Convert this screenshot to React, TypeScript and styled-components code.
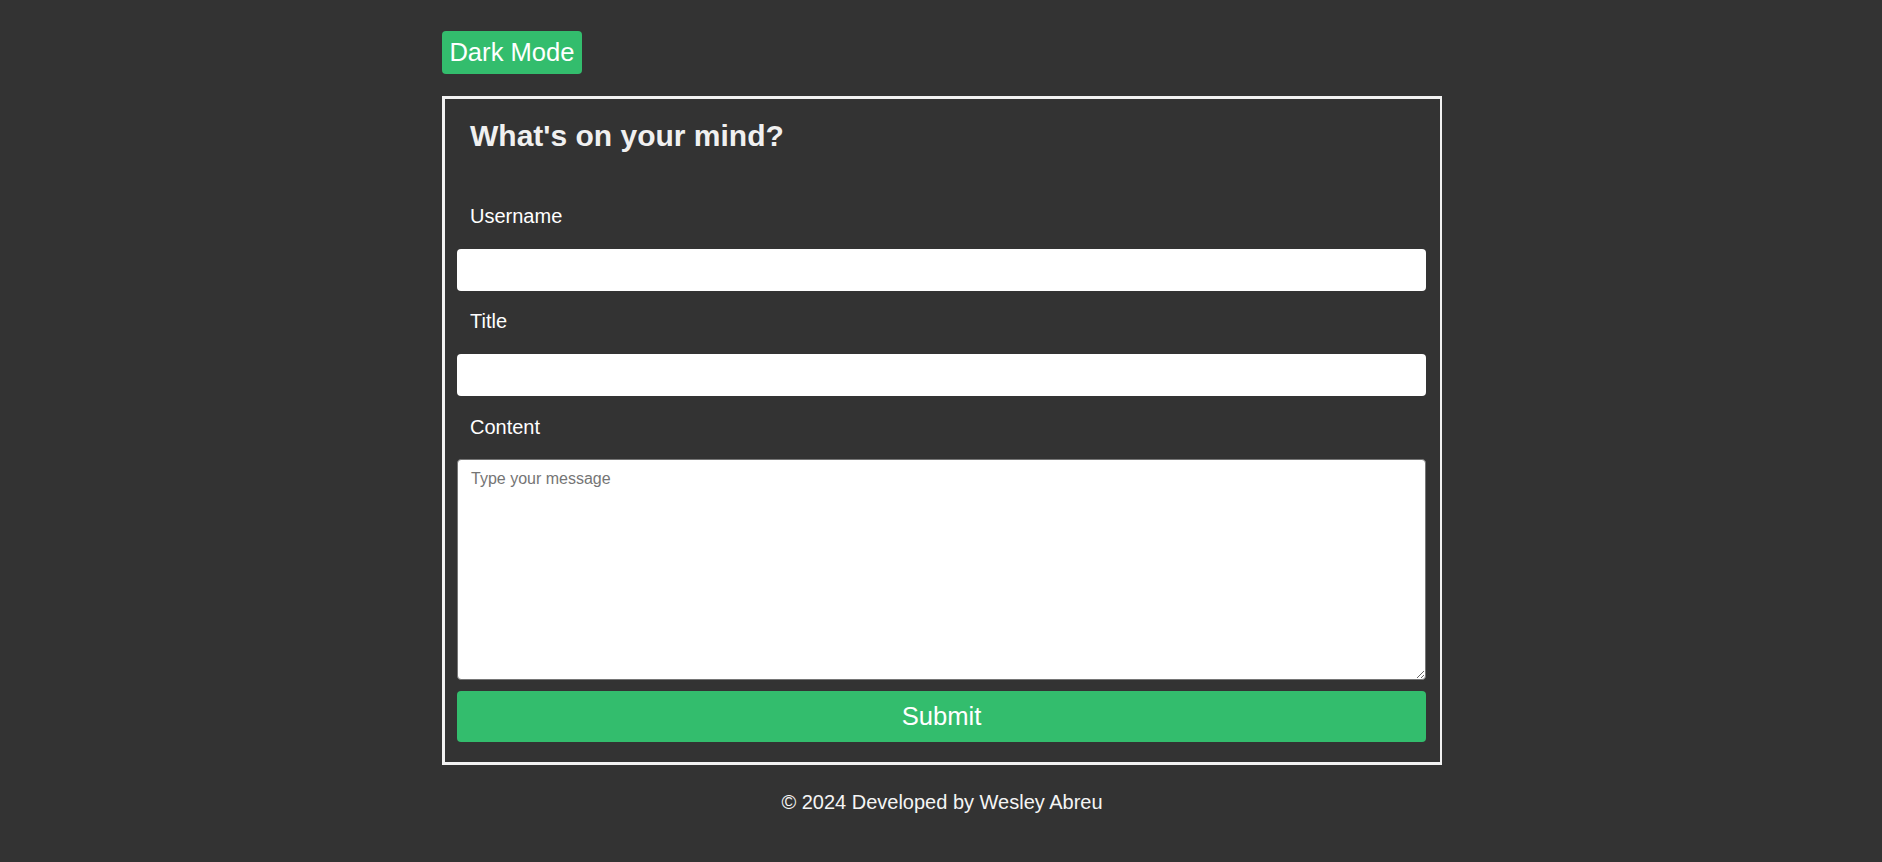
import React from "react";
import styled, { createGlobalStyle } from "styled-components";

const GlobalStyle = createGlobalStyle`
  html, body {
    margin: 0;
    padding: 0;
    background: #333333;
  }
  body {
    font-family: "Liberation Sans", Arial, sans-serif;
    color: #ffffff;
  }
  * { box-sizing: border-box; }
`;

const Page = styled.div`
  min-height: 862px;
  padding: 31px 0 0 2px;
  background: #333333;
`;

const Wrapper = styled.div`
  width: 1000px;
  margin: 0 auto;
  display: flex;
  flex-direction: column;
  align-items: flex-start;
`;

const ModeButton = styled.button`
  font-family: "Liberation Sans", Arial, sans-serif;
  font-size: 25.6px;
  line-height: normal;
  color: #ffffff;
  background: #33bd6d;
  border: none;
  border-radius: 4px;
  padding: 7px 7.4px;
  margin: 0;
  cursor: pointer;
`;

const FormBox = styled.form`
  width: 1000px;
  margin-top: 22px;
  border-style: solid;
  border-color: #f2f2f2;
  border-width: 3px 2px 3px 3px;
  padding: 0 14px 20px 12px;
  display: flex;
  flex-direction: column;
`;

const Heading = styled.h2`
  margin: 20px 0 0 13px;
  font-size: 30px;
  font-weight: bold;
  line-height: normal;
  color: #f0f0f0;
`;

const Label = styled.label<{ $gap: number }>`
  display: block;
  margin: ${(p) => p.$gap}px 0 0 13px;
  font-size: 20px;
  line-height: 23px;
  color: #ffffff;
`;

const TextInput = styled.input`
  display: block;
  width: 100%;
  height: 42px;
  margin-top: 21px;
  border: none;
  border-radius: 4px;
  background: #ffffff;
  padding: 0 13px;
  font-family: "Liberation Sans", Arial, sans-serif;
  font-size: 16px;
  outline: none;
`;

const MessageArea = styled.textarea`
  display: block;
  width: 100%;
  height: 221px;
  margin-top: 20px;
  border: 1px solid #767676;
  border-radius: 4px;
  background: #ffffff;
  padding: 10px 13px;
  font-family: "Liberation Sans", Arial, sans-serif;
  font-size: 16px;
  line-height: normal;
  outline: none;
  &::placeholder {
    color: #757575;
  }
`;

const SubmitButton = styled.button`
  display: block;
  width: 100%;
  height: 51px;
  margin-top: 11px;
  border: none;
  border-radius: 4px;
  background: #33bd6d;
  color: #ffffff;
  font-family: "Liberation Sans", Arial, sans-serif;
  font-size: 25.6px;
  cursor: pointer;
`;

const Footer = styled.footer`
  width: 100%;
  margin-top: 26px;
  text-align: center;
  font-size: 20px;
  line-height: 23px;
  color: #f5f5f5;
`;

export default function App() {
  return (
    <>
      <GlobalStyle />
      <Page>
        <Wrapper>
          <ModeButton type="button">Dark Mode</ModeButton>
          <FormBox onSubmit={(e) => e.preventDefault()}>
            <Heading>What's on your mind?</Heading>
            <Label $gap={52} htmlFor="username">Username</Label>
            <TextInput id="username" type="text" />
            <Label $gap={19} htmlFor="title">Title</Label>
            <TextInput id="title" type="text" />
            <Label $gap={20} htmlFor="content">Content</Label>
            <MessageArea id="content" placeholder="Type your message" />
            <SubmitButton type="submit">Submit</SubmitButton>
          </FormBox>
          <Footer>© 2024 Developed by Wesley Abreu</Footer>
        </Wrapper>
      </Page>
    </>
  );
}
